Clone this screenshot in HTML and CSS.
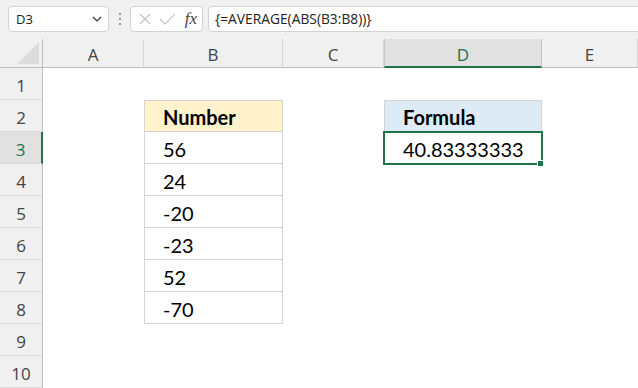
FILE: index.html
```html
<!DOCTYPE html>
<html>

<head>
    <meta charset="UTF-8">
    <title>AVERAGE ABS</title>
    <link rel="stylesheet" href="styles.css">
</head>

<body>
    <div class="toolbar">
        <div class="namebox">
            <span>D3</span>
            <svg class="chevron" width="10" height="6" viewBox="0 0 10 6">
                <polyline points="1,1 5,5 9,1" fill="none" stroke="#333" stroke-width="1.2" />
            </svg>
        </div>
        <div class="grip"><i></i><i></i><i></i></div>
        <div class="fxbox">
            <svg width="12" height="12" viewBox="0 0 12 12">
                <path d="M1 1 L11 11 M11 1 L1 11" stroke="#bcbcbc" stroke-width="1.2" fill="none" />
            </svg>
            <svg width="17" height="12" viewBox="0 0 17 12">
                <polyline points="1,6 6,11 16,1" stroke="#c4c4c4" stroke-width="1.2" fill="none" />
            </svg>
            <span class="fx">fx</span>
        </div>
        <div class="formula">{=AVERAGE(ABS(B3:B8))}</div>
    </div>

    <div class="sheet">
        <div class="corner"><div class="tri"></div></div>
        <div class="colhead">A</div>
        <div class="colhead">B</div>
        <div class="colhead">C</div>
        <div class="colhead sel">D</div>
        <div class="colhead">E</div>

        <div class="rowhead">1</div>
        <div class="cell"></div><div class="cell"></div><div class="cell"></div><div class="cell"></div><div class="cell"></div>

        <div class="rowhead">2</div>
        <div class="cell"></div>
        <div class="cell tb top head-yellow">Number</div>
        <div class="cell"></div>
        <div class="cell tb top head-blue">Formula</div>
        <div class="cell"></div>

        <div class="rowhead sel">3</div>
        <div class="cell"></div>
        <div class="cell tb">56</div>
        <div class="cell"></div>
        <div class="cell tb active">40.83333333</div>
        <div class="cell"></div>

        <div class="rowhead">4</div>
        <div class="cell"></div>
        <div class="cell tb">24</div>
        <div class="cell"></div><div class="cell"></div><div class="cell"></div>

        <div class="rowhead">5</div>
        <div class="cell"></div>
        <div class="cell tb">-20</div>
        <div class="cell"></div><div class="cell"></div><div class="cell"></div>

        <div class="rowhead">6</div>
        <div class="cell"></div>
        <div class="cell tb">-23</div>
        <div class="cell"></div><div class="cell"></div><div class="cell"></div>

        <div class="rowhead">7</div>
        <div class="cell"></div>
        <div class="cell tb">52</div>
        <div class="cell"></div><div class="cell"></div><div class="cell"></div>

        <div class="rowhead">8</div>
        <div class="cell"></div>
        <div class="cell tb">-70</div>
        <div class="cell"></div><div class="cell"></div><div class="cell"></div>

        <div class="rowhead">9</div>
        <div class="cell"></div><div class="cell"></div><div class="cell"></div><div class="cell"></div><div class="cell"></div>

        <div class="rowhead">10</div>
        <div class="cell"></div><div class="cell"></div><div class="cell"></div><div class="cell"></div><div class="cell"></div>
    </div>
</body>

</html>
```

FILE: styles.css
```css
body {
    margin: 0;
    width: 638px;
    height: 388px;
    overflow: hidden;
    background: #fff;
    font-family: "Open Sans", "Noto Sans", sans-serif;
}

.toolbar {
    display: flex;
    align-items: flex-start;
    height: 39px;
    padding: 6px 0 0 8px;
    box-sizing: border-box;
    background: #f0f0f0;
}

.namebox {
    display: flex;
    align-items: center;
    justify-content: space-between;
    width: 101px;
    height: 26px;
    box-sizing: border-box;
    padding: 0 6px 0 7px;
    background: #fff;
    border: 1px solid #d2d2d2;
    border-radius: 4px;
    font-size: 13px;
    color: #222;
}

.grip {
    display: flex;
    flex-direction: column;
    justify-content: center;
    gap: 3px;
    width: 21px;
    height: 26px;
    align-items: center;
}

.grip i {
    display: block;
    width: 2px;
    height: 2px;
    background: #9a9a9a;
}

.fxbox {
    display: flex;
    align-items: center;
    gap: 8px;
    width: 73px;
    height: 26px;
    box-sizing: border-box;
    padding: 0 5px 0 8px;
    background: #fff;
    border: 1px solid #d2d2d2;
    border-radius: 4px;
}

.fx {
    font-family: "Liberation Serif", serif;
    font-style: italic;
    font-size: 17px;
    color: #444;
    margin-left: 1px;
}

.formula {
    flex: 1;
    height: 26px;
    margin-left: 5px;
    margin-right: -4px;
    box-sizing: border-box;
    padding-left: 6px;
    line-height: 24px;
    background: #fff;
    border: 1px solid #d2d2d2;
    border-radius: 4px;
    font-size: 13.8px;
    color: #222;
}

.sheet {
    display: grid;
    grid-template-columns: 43px 101px 139px 101px 158px 1fr;
    grid-template-rows: 29px repeat(10, 32px);
}

.corner {
    position: relative;
    background: #f0f0f0;
    border-right: 1px solid #bdbdbd;
    border-bottom: 1px solid #bdbdbd;
}

.tri {
    position: absolute;
    left: 17px;
    top: 3px;
    width: 22px;
    height: 22px;
    background: #dcdcdc;
    clip-path: polygon(100% 0, 100% 100%, 0 100%);
}

.colhead {
    background: #f0f0f0;
    border-right: 1px solid #d6d6d6;
    border-bottom: 1px solid #bdbdbd;
    text-align: center;
    font-size: 17px;
    line-height: 32px;
    color: #444;
}

.colhead.sel {
    background: #e1e1e1;
    color: #217346;
    border-left: 1px solid #c6c6c6;
    border-right: 1px solid #c6c6c6;
    border-bottom: 2px solid #217346;
}

.rowhead {
    background: #f0f0f0;
    border-right: 1px solid #bdbdbd;
    border-bottom: 1px solid #dadada;
    text-align: center;
    font-size: 17px;
    line-height: 35px;
    color: #444;
}

.rowhead.sel {
    background: #e1e1e1;
    color: #217346;
    border-right: 2px solid #217346;
}

.cell {
    box-sizing: border-box;
    padding-left: 18px;
    font-family: Lato, "Liberation Sans", sans-serif;
    font-size: 20px;
    line-height: 34px;
    color: #000;
    white-space: nowrap;
}

.tb {
    border-left: 1px solid #d4d4d4;
    border-right: 1px solid #d4d4d4;
    border-bottom: 1px solid #d4d4d4;
    padding-left: 18px;
}

.tb.top {
    border-top: 1px solid #d4d4d4;
    font-weight: bold;
    line-height: 32px;
}

.head-yellow {
    background: #fff2cc;
}

.head-blue {
    background: #ddebf7;
}

.active {
    position: relative;
    outline: 2px solid #217346;
    outline-offset: -1px;
}

.active::after {
    content: "";
    position: absolute;
    right: -3px;
    bottom: -4px;
    width: 5px;
    height: 5px;
    background: #217346;
    border: 1px solid #fff;
}
```
